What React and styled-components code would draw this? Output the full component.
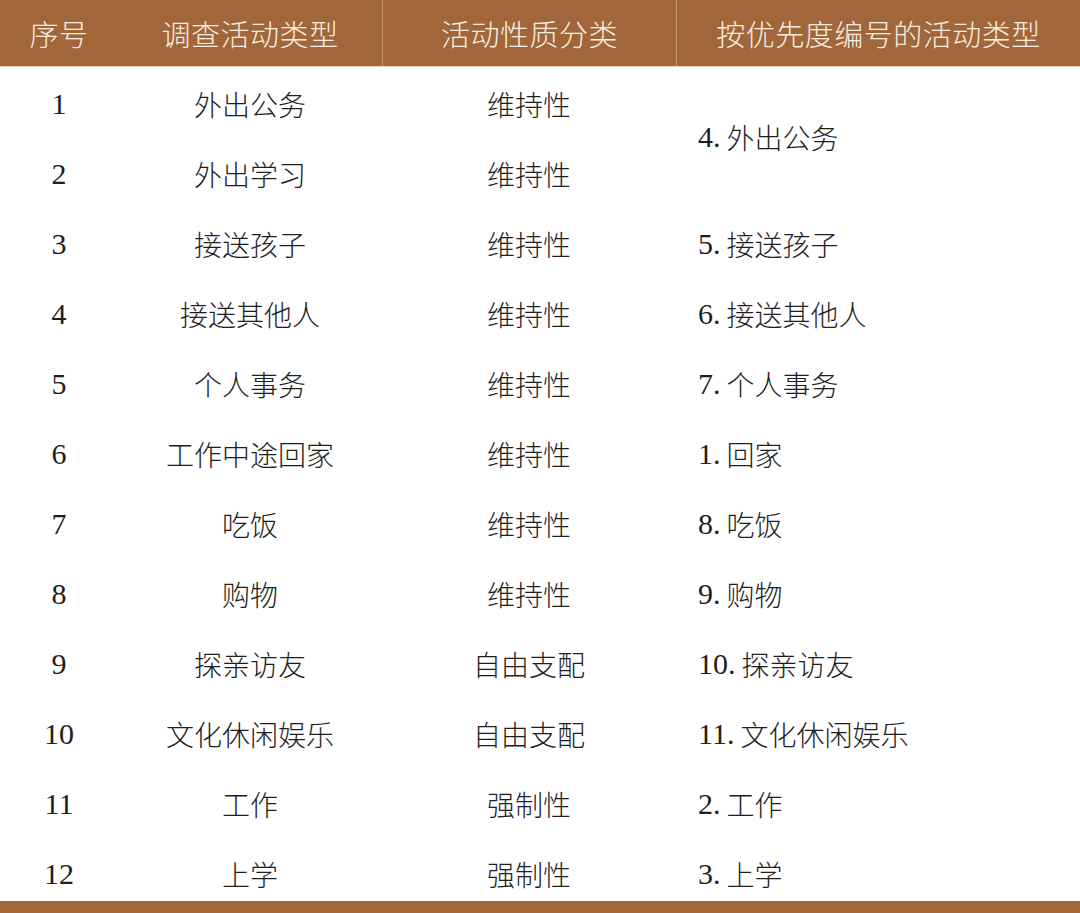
import React from "react";
import styled, { createGlobalStyle } from "styled-components";

const Global = createGlobalStyle`
  html, body { margin: 0; padding: 0; background: #ffffff; }
  #root { width: 1080px; }
`;

const CJK = `"Noto Sans CJK SC", "Noto Sans", sans-serif`;
const SERIF = `"Liberation Serif", "Noto Sans CJK SC", serif`;
const BROWN = "#a1673a";

const Table = styled.div`
  width: 1080px;
  display: flex;
  flex-direction: column;
  background: #fff;
`;

const Cols = `118px 264px 294px 1fr`;

const Header = styled.div`
  display: grid;
  grid-template-columns: ${Cols};
  height: 67px;
  background: ${BROWN};
  border-bottom: 1px solid #e9d6c5;
  box-sizing: border-box;
`;

const HeadCell = styled.div`
  display: flex;
  align-items: center;
  justify-content: center;
  color: #f7ede0;
  font-family: ${CJK};
  font-weight: 300;
  font-size: 29px;
  letter-spacing: 0.5px;
  padding-bottom: 1px;
  border-left: ${(p) => (p.$sep ? "1px solid #c89872" : "none")};
`;

const Body = styled.div`
  display: grid;
  grid-template-columns: ${Cols};
  grid-template-rows: repeat(11, 70px) 64px;
`;

const Cell = styled.div`
  display: flex;
  justify-content: ${(p) => (p.$left ? "flex-start" : "center")};
  align-items: ${(p) => (p.$mid ? "center" : "flex-start")};
  padding-top: ${(p) => (p.$mid ? "0" : "20px")};
  padding-left: ${(p) => (p.$left ? "22px" : "0")};
  grid-row: ${(p) => (p.$span ? `span ${p.$span}` : "auto")};
  box-sizing: border-box;
  color: #1e1e1e;
  font-family: ${CJK};
  font-weight: 300;
  font-size: 28px;
  line-height: 34px;
  white-space: nowrap;
`;

const Num = styled.span`
  font-family: ${SERIF};
  font-size: 30px;
  line-height: 34px;
  color: #1e1e1e;
  margin-right: ${(p) => (p.$gap ? "6px" : "0")};
`;

const Bar = styled.div`
  height: 12px;
  background: ${BROWN};
`;

const rows = [
  ["外出公务", "维持性"],
  ["外出学习", "维持性"],
  ["接送孩子", "维持性"],
  ["接送其他人", "维持性"],
  ["个人事务", "维持性"],
  ["工作中途回家", "维持性"],
  ["吃饭", "维持性"],
  ["购物", "维持性"],
  ["探亲访友", "自由支配"],
  ["文化休闲娱乐", "自由支配"],
  ["工作", "强制性"],
  ["上学", "强制性"],
];

const prio = [
  null,
  null,
  ["5.", "接送孩子"],
  ["6.", "接送其他人"],
  ["7.", "个人事务"],
  ["1.", "回家"],
  ["8.", "吃饭"],
  ["9.", "购物"],
  ["10.", "探亲访友"],
  ["11.", "文化休闲娱乐"],
  ["2.", "工作"],
  ["3.", "上学"],
];

export default function App() {
  return (
    <>
      <Global />
      <Table>
        <Header>
          <HeadCell>序号</HeadCell>
          <HeadCell>调查活动类型</HeadCell>
          <HeadCell $sep>活动性质分类</HeadCell>
          <HeadCell $sep>按优先度编号的活动类型</HeadCell>
        </Header>
        <Body>
          {rows.map((r, i) => (
            <React.Fragment key={i}>
              <Cell>
                <Num>{i + 1}</Num>
              </Cell>
              <Cell>{r[0]}</Cell>
              <Cell>{r[1]}</Cell>
              {i === 0 && (
                <Cell $left $span={2} $mid>
                  <Num $gap>4.</Num>外出公务
                </Cell>
              )}
              {prio[i] && (
                <Cell $left>
                  <Num $gap>{prio[i][0]}</Num>
                  {prio[i][1]}
                </Cell>
              )}
            </React.Fragment>
          ))}
        </Body>
        <Bar />
      </Table>
    </>
  );
}
